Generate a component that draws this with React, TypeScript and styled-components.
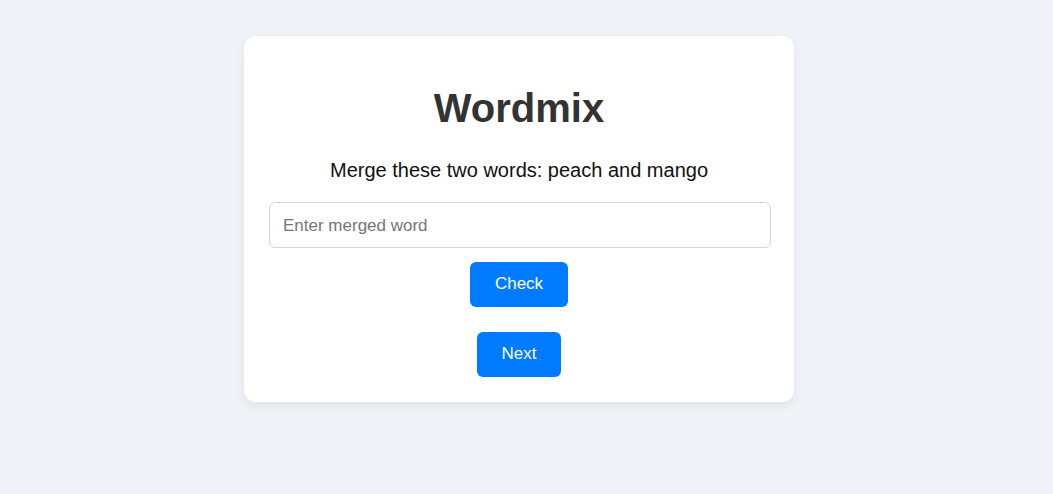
import React from "react";
import styled, { createGlobalStyle } from "styled-components";

const Global = createGlobalStyle`
  html, body { margin: 0; padding: 0; }
  body {
    background: #f0f4f8;
    font-family: "Liberation Sans", Arial, sans-serif;
  }
`;

const Page = styled.div`
  display: flex;
  justify-content: center;
  padding: 36px 15px 0 0;
  min-height: 494px;
  box-sizing: border-box;
`;

const Card = styled.div`
  width: 550px;
  box-sizing: border-box;
  background: #ffffff;
  border-radius: 12px;
  box-shadow: 0 4px 12px rgba(0, 0, 0, 0.08);
  padding: 25px;
  display: flex;
  flex-direction: column;
  align-items: flex-start;
  height: 366px;
`;

const Title = styled.h1`
  align-self: center;
  margin: 24px 0 0;
  font-size: 40px;
  line-height: 46px;
  font-weight: 700;
  color: #333333;
`;

const Prompt = styled.p`
  align-self: center;
  margin: 28px 0 0;
  font-size: 20px;
  line-height: 23px;
  color: #111111;
`;

const Input = styled.input`
  margin-top: 20px;
  width: calc(100% + 2px);
  height: 46px;
  box-sizing: border-box;
  border: 1px solid #d6d6d6;
  border-radius: 6px;
  padding: 1px 13px 0;
  font-family: "Liberation Sans", Arial, sans-serif;
  font-size: 17px;
  color: #333;
  outline: none;
  &::placeholder { color: #767676; }
`;

const Button = styled.button<{ $w: number; $mt: number }>`
  align-self: center;
  margin-top: ${(p) => p.$mt}px;
  width: ${(p) => p.$w}px;
  height: 45px;
  padding: 0 0 2px;
  border: none;
  border-radius: 6px;
  background: #007bff;
  color: #ffffff;
  font-family: "Liberation Sans", Arial, sans-serif;
  font-size: 17px;
  cursor: pointer;
`;

export default function App() {
  return (
    <>
      <Global />
      <Page>
        <Card>
          <Title>Wordmix</Title>
          <Prompt>Merge these two words: peach and mango</Prompt>
          <Input placeholder="Enter merged word" />
          <Button $w={98} $mt={14}>Check</Button>
          <Button $w={84} $mt={25}>Next</Button>
        </Card>
      </Page>
    </>
  );
}
